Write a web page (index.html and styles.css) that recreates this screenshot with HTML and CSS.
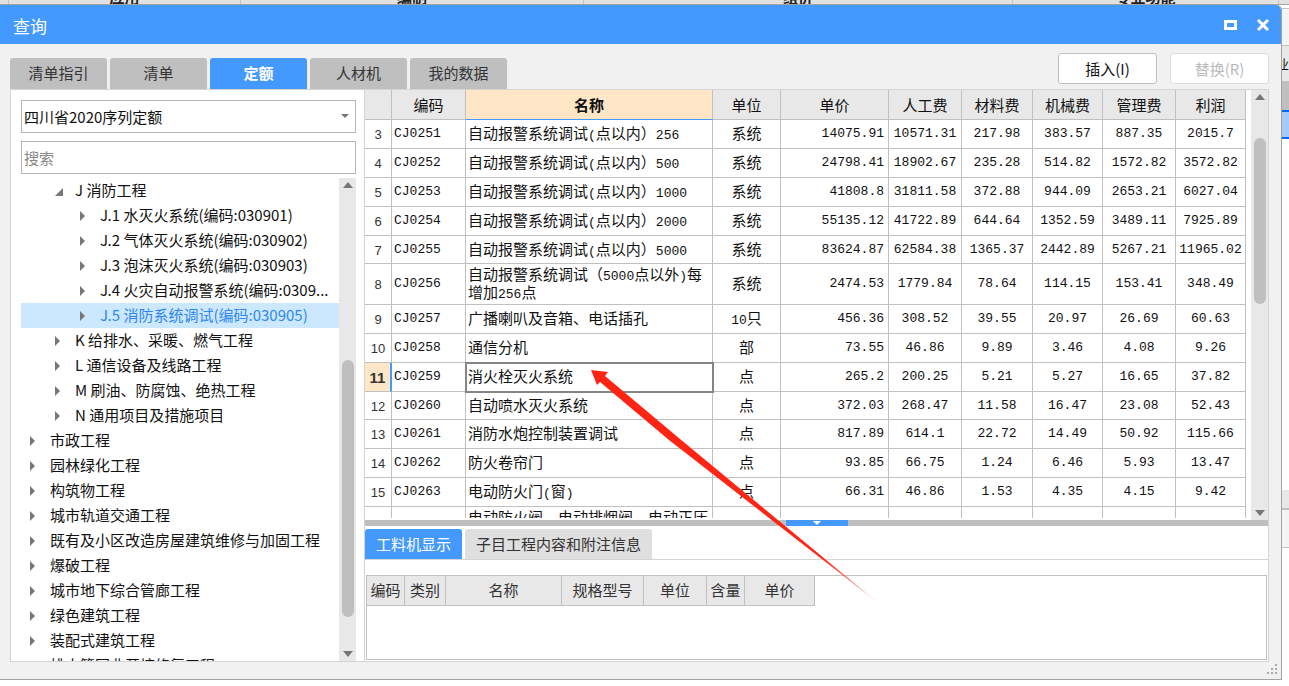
FILE: index.html
```html
<!DOCTYPE html>
<html lang="zh-CN">
<head>
<meta charset="utf-8">
<title>查询</title>
<link rel="stylesheet" href="styles.css">
</head>
<body>
<div class="desktop">
  <div class="strip" aria-hidden="true">
    <span class="strip-cell c0"></span><span class="strip-cell c1">应用</span><span class="strip-cell c2">编制</span><span class="strip-cell c3">组价</span><span class="strip-cell c4">专业功能</span><span class="strip-cell c5"></span>
  </div>
  <div class="stage">
    <main class="dialog">
      <header class="titlebar">
        <h1>查询</h1>
        <div class="winbtns">
          <button type="button" aria-label="最大化"><svg width="14" height="12" viewBox="0 0 14 12"><path d="M0 1h13v10H0zM3 4v4h7V4z" fill="#fff" fill-rule="evenodd"/></svg></button>
          <button type="button" aria-label="关闭"><svg width="14" height="12" viewBox="0 0 14 12"><path d="M2 1L12 11M12 1L2 11" stroke="#fff" stroke-width="3"/></svg></button>
        </div>
      </header>
      <div class="toolbar">
        <nav class="tabs">
          <button type="button">清单指引</button>
          <button type="button">清单</button>
          <button type="button" class="on">定额</button>
          <button type="button">人材机</button>
          <button type="button">我的数据</button>
        </nav>
        <div class="actions">
          <button type="button">插入(I)</button>
          <button type="button" disabled>替换(R)</button>
        </div>
      </div>
      <div class="content">
        <aside class="side">
          <div class="combo">
            <select aria-label="定额库"><option>四川省2020序列定额</option></select>
            <svg class="combo-arrow" width="8" height="4" viewBox="0 0 8 4"><path d="M0 0h8L4 4z" fill="#777"/></svg>
          </div>
          <input class="search" type="text" placeholder="搜索" aria-label="搜索">
          <div class="tree-wrap">
            <ul class="tree">
              <li class="l2 open">J 消防工程</li>
              <li class="l3">J.1 水灭火系统(编码:030901)</li>
              <li class="l3">J.2 气体灭火系统(编码:030902)</li>
              <li class="l3">J.3 泡沫灭火系统(编码:030903)</li>
              <li class="l3">J.4 火灾自动报警系统(编码:0309...</li>
              <li class="l3 sel">J.5 消防系统调试(编码:030905)</li>
              <li class="l2">K 给排水、采暖、燃气工程</li>
              <li class="l2">L 通信设备及线路工程</li>
              <li class="l2">M 刷油、防腐蚀、绝热工程</li>
              <li class="l2">N 通用项目及措施项目</li>
              <li class="l1">市政工程</li>
              <li class="l1">园林绿化工程</li>
              <li class="l1">构筑物工程</li>
              <li class="l1">城市轨道交通工程</li>
              <li class="l1">既有及小区改造房屋建筑维修与加固工程</li>
              <li class="l1">爆破工程</li>
              <li class="l1">城市地下综合管廊工程</li>
              <li class="l1">绿色建筑工程</li>
              <li class="l1">装配式建筑工程</li>
              <li class="l1">排水管网非开挖修复工程</li>
            </ul>
            <div class="sbar tree-bar"><i class="up"></i><i class="thumb"></i><i class="down"></i></div>
          </div>
        </aside>
        <section class="right">
          <div class="grid-wrap">
            <div class="grid-clip">
            <table class="grid">
              <colgroup><col class="w-no"><col class="w-code"><col><col class="w-unit"><col class="w-price"><col class="w-labor"><col class="w-mat"><col class="w-mech"><col class="w-mgmt"><col class="w-profit"></colgroup>
              <thead><tr><th></th><th>编码</th><th class="hot">名称</th><th>单位</th><th>单价</th><th>人工费</th><th>材料费</th><th>机械费</th><th>管理费</th><th>利润</th></tr></thead>
              <tbody>
              <tr><td>3</td><td>CJ0251</td><td>自动报警系统调试<b>(</b>点以内）<b>256</b></td><td>系统</td><td>14075.91</td><td>10571.31</td><td>217.98</td><td>383.57</td><td>887.35</td><td>2015.7</td></tr>
              <tr><td>4</td><td>CJ0252</td><td>自动报警系统调试<b>(</b>点以内）<b>500</b></td><td>系统</td><td>24798.41</td><td>18902.67</td><td>235.28</td><td>514.82</td><td>1572.82</td><td>3572.82</td></tr>
              <tr><td>5</td><td>CJ0253</td><td>自动报警系统调试<b>(</b>点以内）<b>1000</b></td><td>系统</td><td>41808.8</td><td>31811.58</td><td>372.88</td><td>944.09</td><td>2653.21</td><td>6027.04</td></tr>
              <tr><td>6</td><td>CJ0254</td><td>自动报警系统调试<b>(</b>点以内）<b>2000</b></td><td>系统</td><td>55135.12</td><td>41722.89</td><td>644.64</td><td>1352.59</td><td>3489.11</td><td>7925.89</td></tr>
              <tr><td>7</td><td>CJ0255</td><td>自动报警系统调试<b>(</b>点以内）<b>5000</b></td><td>系统</td><td>83624.87</td><td>62584.38</td><td>1365.37</td><td>2442.89</td><td>5267.21</td><td>11965.02</td></tr>
              <tr class="tall"><td>8</td><td>CJ0256</td><td>自动报警系统调试（<b>5000</b>点以外<b>)</b>每增加<b>256</b>点</td><td>系统</td><td>2474.53</td><td>1779.84</td><td>78.64</td><td>114.15</td><td>153.41</td><td>348.49</td></tr>
              <tr><td>9</td><td>CJ0257</td><td>广播喇叭及音箱、电话插孔</td><td><b>10</b>只</td><td>456.36</td><td>308.52</td><td>39.55</td><td>20.97</td><td>26.69</td><td>60.63</td></tr>
              <tr><td>10</td><td>CJ0258</td><td>通信分机</td><td>部</td><td>73.55</td><td>46.86</td><td>9.89</td><td>3.46</td><td>4.08</td><td>9.26</td></tr>
              <tr class="cur"><td>11</td><td>CJ0259</td><td>消火栓灭火系统</td><td>点</td><td>265.2</td><td>200.25</td><td>5.21</td><td>5.27</td><td>16.65</td><td>37.82</td></tr>
              <tr><td>12</td><td>CJ0260</td><td>自动喷水灭火系统</td><td>点</td><td>372.03</td><td>268.47</td><td>11.58</td><td>16.47</td><td>23.08</td><td>52.43</td></tr>
              <tr><td>13</td><td>CJ0261</td><td>消防水炮控制装置调试</td><td>点</td><td>817.89</td><td>614.1</td><td>22.72</td><td>14.49</td><td>50.92</td><td>115.66</td></tr>
              <tr><td>14</td><td>CJ0262</td><td>防火卷帘门</td><td>点</td><td>93.85</td><td>66.75</td><td>1.24</td><td>6.46</td><td>5.93</td><td>13.47</td></tr>
              <tr><td>15</td><td>CJ0263</td><td>电动防火门<b>(</b>窗<b>)</b></td><td>点</td><td>66.31</td><td>46.86</td><td>1.53</td><td>4.35</td><td>4.15</td><td>9.42</td></tr>
              <tr class="tall"><td></td><td></td><td>电动防火阀、电动排烟阀、电动正压送风阀</td><td></td><td></td><td></td><td></td><td></td><td></td><td></td></tr>
              </tbody>
            </table>
            </div>
            <div class="sbar grid-bar"><i class="up"></i><i class="thumb"></i><i class="down"></i></div>
          </div>
          <div class="splitter"><button type="button" aria-label="收起"><svg width="8" height="4" viewBox="0 0 8 4"><path d="M0 0h8L4 4z" fill="#fff"/></svg></button></div>
          <nav class="subtabs"><button type="button" class="on">工料机显示</button><button type="button">子目工程内容和附注信息</button></nav>
          <div class="detail">
            <div class="detail-box">
              <table class="detail-table">
                <colgroup><col class="d1"><col class="d2"><col class="d3"><col class="d4"><col class="d5"><col class="d6"><col class="d7"></colgroup>
                <thead><tr><th>编码</th><th>类别</th><th>名称</th><th>规格型号</th><th>单位</th><th>含量</th><th>单价</th></tr></thead>
              </table>
            </div>
          </div>
        </section>
      </div>
      <footer class="grip"><svg width="11" height="11" viewBox="0 0 11 11" fill="#aaa"><path d="M8 0h2v2H8zM4 4h2v2H4zM8 4h2v2H8zM0 8h2v2H0zM4 8h2v2H4zM8 8h2v2H8z"/></svg></footer>
    </main>
    <div class="behind" aria-hidden="true">
      <div class="b1"></div><div class="b2">专业</div><div class="b3"></div><div class="b4"></div><div class="b5"></div><div class="b6"></div><div class="b7"></div>
    </div>
  </div>
  <svg class="arrow" width="290" height="236" viewBox="0 0 290 236" aria-hidden="true">
    <defs><linearGradient id="fade" gradientUnits="userSpaceOnUse" x1="0" y1="0" x2="286" y2="232"><stop offset=".8" stop-color="#ff2414"/><stop offset="1" stop-color="#ff2414" stop-opacity=".3"/></linearGradient></defs>
    <path d="M0 0L17 2L14 6L89 69L286 232L78 70L9 12L6 15Z" fill="url(#fade)"/>
  </svg>
</div>
</body>
</html>
```
FILE: styles.css
```css
* { box-sizing: border-box; }
body { margin: 0; background: #fff; color: #111; font: 15px/20px "Noto Sans CJK SC", sans-serif; }
button, input, select { font: inherit; color: inherit; margin: 0; padding: 0; border: 0; }
.desktop { position: relative; height: 100vh; min-height: 600px; display: flex; flex-direction: column; overflow: hidden; padding-bottom: 6px; }

.strip { display: flex; height: 5px; overflow: hidden; background: #e1e1e1; border-bottom: 1px solid #a3a3a3; }
.strip-cell { display: flex; align-items: flex-end; justify-content: center; height: 4px; border-right: 1px solid #c4c4c4; font-weight: bold; color: #222; line-height: 14px; }
.c0 { width: 9px; }
.c1 { width: 232px; }
.c2 { width: 343px; }
.c3 { flex: 1; }
.c4 { width: 266px; }
.c5 { width: 10px; border: 0; }

.stage { flex: 1; display: flex; min-height: 0; }
.dialog { flex: 1; min-width: 0; display: flex; flex-direction: column; background: #f1f1f1; border: solid #a3a3a3; border-width: 0 1px 1px 0; border-top-right-radius: 5px; }
.titlebar { display: flex; align-items: center; justify-content: space-between; height: 39px; padding: 0 11px 0 13px; background: #4499ff; color: #fff; border-top-right-radius: 5px; }
.titlebar h1 { margin: 0; padding-top: 3px; font-size: 17px; font-weight: 400; }
.winbtns { display: flex; gap: 18px; }
.winbtns button { display: flex; background: none; }

.toolbar { display: flex; justify-content: space-between; height: 45px; padding: 0 12px 0 10px; }
.tabs { display: flex; gap: 3px; align-items: flex-end; }
.tabs button { width: 97px; height: 31px; padding-bottom: 2px; background: #bfbfbf; color: #333; border-radius: 3px 3px 0 0; }
.tabs .on { background: #4499ff; color: #fff; font-weight: bold; }
.actions { display: flex; gap: 13px; padding-top: 9px; }
.actions button { width: 99px; height: 31px; background: #fff; border: 1px solid #bfbfbf; border-radius: 3px; }
.actions button:disabled { color: #bbb; border-color: #ddd; }

.content { flex: 1; min-height: 0; display: flex; margin: 0 12px 0 10px; border: 1px solid #d4d4d4; background: #fff; }
.side { width: 353px; flex: none; display: flex; flex-direction: column; padding: 10px 8px 0 10px; }
.combo { position: relative; height: 33px; border: 1px solid #b5b5b5; }
.combo select { width: 100%; height: 100%; padding-left: 2px; appearance: none; background: #fff; }
.combo-arrow { position: absolute; right: 6px; top: 13px; pointer-events: none; }
.search { height: 33px; margin-top: 8px; padding-left: 2px; border: 1px solid #b5b5b5; background: #fff; }
.search::placeholder { color: #888; }
.tree-wrap { flex: 1; min-height: 0; display: flex; margin-top: 4px; overflow: hidden; }
.tree { flex: 1; min-width: 0; margin: 0; padding: 0; list-style: none; }
.tree li { height: 25px; line-height: 24px; white-space: nowrap; overflow: hidden; }
.tree li::before { content: ""; display: inline-block; border: solid transparent; border-width: 5px 0 5px 5px; border-left-color: #777; margin-right: 15px; }
.tree .l1 { padding-left: 9px; }
.tree .l2 { padding-left: 34px; }
.tree .l3 { padding-left: 59px; }
.tree .open::before { border-width: 0 0 8px 8px; border-left-color: transparent; border-bottom-color: #777; margin-right: 12px; }
.tree .sel { background: #cce8ff; color: #2f86f0; }

.sbar { display: flex; flex-direction: column; align-items: center; justify-content: space-between; width: 17px; flex: none; padding: 4px 0; background: #e8e8e8; }
.sbar .up { border: solid transparent; border-width: 0 5px 6px; border-bottom-color: #777; }
.sbar .down { border: solid transparent; border-width: 6px 5px 0; border-top-color: #777; }
.sbar .thumb { width: 12px; border-radius: 6px; background: #bfbfbf; }
.tree-bar .thumb { height: 257px; margin: auto 0 34px; }
.grid-bar .thumb { height: 166px; margin: 38px 0 auto; }

.right { flex: 1; min-width: 0; display: flex; flex-direction: column; border-left: 1px solid #d4d4d4; }
.grid-wrap { flex: 1; min-height: 0; display: flex; gap: 5px; overflow: hidden; }
.grid-clip { flex: 1; min-width: 0; overflow: hidden; margin-bottom: 2px; }
.grid { width: 100%; table-layout: fixed; border-collapse: separate; border-spacing: 0; color: #111; }
.grid th, .grid td { height: 29px; padding: 0 2px; border: solid #c0c0c0; border-width: 0 1px 1px 0; line-height: 18px; text-align: center; overflow: hidden; white-space: nowrap; }
.grid th { height: 30px; background: #e8e8e8; font-weight: 400; }
.grid .hot { background: #ffe6c6; font-weight: bold; border-bottom-color: #4499ff; }
.grid td { font-family: "Liberation Mono", "Noto Sans CJK SC", monospace; font-size: 13px; }
.grid tr:nth-child(5n) td { height: 28px; }
.grid td:first-child { font-family: "Liberation Sans", sans-serif; color: #333; padding: 2px 0 0; }
.grid td:nth-child(2) { text-align: left; }
.grid td:nth-child(3), .grid td:nth-child(4) { padding-bottom: 2px; font: 15px/18px "Noto Sans CJK SC", sans-serif; }
.grid td:nth-child(3) { text-align: left; white-space: normal; }
.grid td:nth-child(5) { text-align: right; padding-right: 4px; }
.grid b { font: 13px/1 "Liberation Mono", monospace; }
.grid .tall td { height: 41px; }
.grid .cur td:first-child { background: #ffe6c6; font-weight: bold; font-size: 15px; border-right: 2px solid #4499ff; }
.grid .cur td:nth-child(3) { outline: 2px solid #858585; outline-offset: -1px; }
.w-no { width: 27px; }
.w-code { width: 74px; }
.w-unit { width: 68px; }
.w-price { width: 108px; }
.w-labor, .w-mgmt { width: 73px; }
.w-mat { width: 71px; }
.w-mech, .w-profit { width: 70px; }

.splitter { height: 6px; display: flex; justify-content: center; background: #bfbfbf; }
.splitter button { width: 62px; display: flex; justify-content: center; align-items: center; background: #4499ff; }
.subtabs { display: flex; gap: 3px; padding-top: 3px; border-bottom: 1px solid #d4d4d4; }
.subtabs button { height: 30px; padding: 0 11px; background: #dfdfdf; color: #333; border-radius: 3px 3px 0 0; }
.subtabs .on { background: #4499ff; color: #fff; }
.detail { display: flex; height: 101px; padding: 15px 1px 1px; }
.detail-box { flex: 1; border: 1px solid #c0c0c0; }
.detail-table { table-layout: fixed; width: 448px; border-spacing: 0; }
.detail-table th { height: 30px; padding: 0 0 2px; border: solid #c0c0c0; border-width: 0 1px 1px 0; background: #e8e8e8; font-weight: 400; color: #333; }
.d1 { width: 38px; }
.d2 { width: 41px; }
.d3 { width: 116px; }
.d4 { width: 82px; }
.d5 { width: 63px; }
.d6 { width: 38px; }
.d7 { width: 70px; }
.grip { display: flex; justify-content: flex-end; align-items: flex-end; height: 17px; padding: 0 3px 4px; }

.behind { width: 7px; flex: none; overflow: hidden; white-space: nowrap; background: #fff; }
.b1 { height: 38px; border: solid #c4c4c4; border-width: 1px 0; margin-top: 3px; background: #f4f4f4; }
.b2 { height: 35px; padding-top: 8px; background: #e8e8e8; direction: rtl; font-size: 13px; }
.b3 { height: 29px; background: #bfbfbf; }
.b4 { height: 29px; background: #a3cbff; border: solid #0066ee; border-width: 2px 0; }
.b5 { height: 351px; }
.b6 { height: 18px; background: #e8e8e8; }
.b7 { height: 40px; background: #f4f4f4; border: solid #c0c0c0; border-width: 2px 0 1px; }
.arrow { position: absolute; left: 591px; top: 370px; pointer-events: none; }
```
